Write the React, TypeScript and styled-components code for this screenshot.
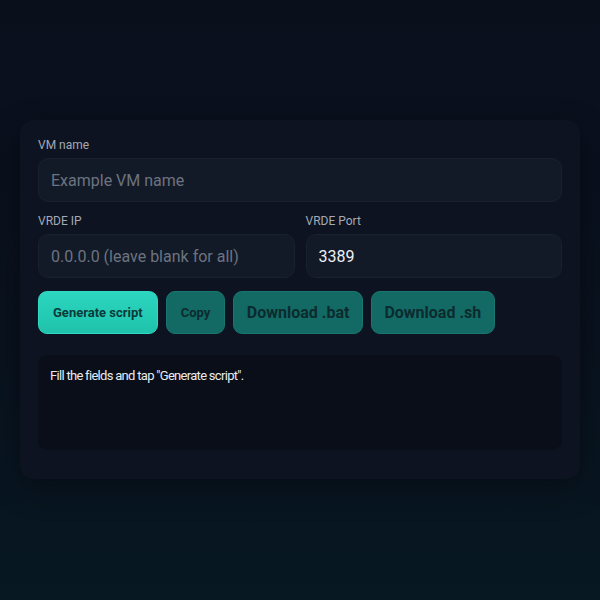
import React from "react";
import styled, { createGlobalStyle } from "styled-components";

const Global = createGlobalStyle`
  html, body { margin: 0; padding: 0; }
  body {
    width: 600px;
    height: 600px;
    background: linear-gradient(180deg, #0a0f1c 0%, #09121e 60%, #071822 100%);
    font-family: Roboto, "Noto Sans", sans-serif;
    overflow: hidden;
  }
`;

const Page = styled.div`
  padding: 120px 20px 0 20px;
`;

const Card = styled.div`
  background: #0d1320;
  border-radius: 14px;
  padding: 18px 18px 29px 18px;
  box-shadow: 0 10px 30px rgba(0, 0, 0, 0.35);
  display: flex;
  flex-direction: column;
`;

const Field = styled.div`
  display: flex;
  flex-direction: column;
  flex: 1;
  min-width: 0;
`;

const Label = styled.label`
  font-size: 12px;
  color: #a3aab6;
  line-height: 14px;
  margin-bottom: 6px;
`;

const Input = styled.input`
  box-sizing: border-box;
  height: 44px;
  width: 100%;
  background: #131a27;
  border: 1px solid #182031;
  border-radius: 10px;
  padding: 0 12px;
  font-family: Roboto, sans-serif;
  font-size: 16px;
  color: #eef1f5;
  outline: none;
  &::placeholder { color: #6c7380; }
`;

const Row = styled.div`
  display: flex;
  gap: 11px;
  margin-top: 12px;
`;

const Buttons = styled.div`
  display: flex;
  gap: 8px;
  margin-top: 13px;
`;

const Button = styled.button<{ $primary?: boolean; $big?: boolean }>`
  height: 43px;
  padding: 0 ${(p) => (p.$big ? "12.5px" : "14px")};
  border-radius: 9px;
  font-family: Roboto, sans-serif;
  font-weight: 700;
  font-size: ${(p) => (p.$big ? "16px" : "13px")};
  color: ${(p) => (p.$primary ? "#0a3b3a" : "#0b2b2f")};
  background: ${(p) =>
    p.$primary ? "linear-gradient(180deg, #2cd6c0 0%, #1fc2ab 100%)" : "#136a64"};
  border: 1px solid ${(p) => (p.$primary ? "#30d9c4" : "#177770")};
`;

const Output = styled.div`
  margin-top: 21px;
  height: 95px;
  box-sizing: border-box;
  background: #0a0e19;
  border-radius: 10px;
  padding: 13px 12px;
  font-size: 13px;
  letter-spacing: -0.7px;
  color: #e8ebf0;
  line-height: 16px;
`;

export default function App() {
  return (
    <>
      <Global />
      <Page>
        <Card>
          <Field>
            <Label>VM name</Label>
            <Input placeholder="Example VM name" />
          </Field>
          <Row>
            <Field>
              <Label>VRDE IP</Label>
              <Input placeholder="0.0.0.0 (leave blank for all)" />
            </Field>
            <Field>
              <Label>VRDE Port</Label>
              <Input defaultValue="3389" />
            </Field>
          </Row>
          <Buttons>
            <Button $primary>Generate script</Button>
            <Button>Copy</Button>
            <Button $big>Download .bat</Button>
            <Button $big>Download .sh</Button>
          </Buttons>
          <Output>Fill the fields and tap "Generate script".</Output>
        </Card>
      </Page>
    </>
  );
}
